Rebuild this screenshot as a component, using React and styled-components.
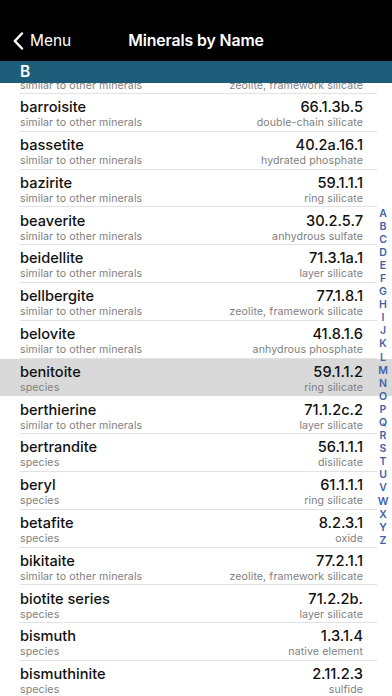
import React from "react";
import styled, { createGlobalStyle } from "styled-components";

const Global = createGlobalStyle`
  html, body { margin: 0; padding: 0; background: #fff; }
  body { width: 392px; height: 696px; overflow: hidden; font-family: Inter, "Noto Sans", sans-serif; -webkit-font-smoothing: antialiased; }
  * { box-sizing: border-box; }
`;

const Screen = styled.div`
  width: 392px;
  height: 696px;
  display: flex;
  flex-direction: column;
  background: #fff;
`;

const NavBar = styled.header`
  height: 61px;
  flex: none;
  background: #000;
  padding-top: 20px;
  display: grid;
  grid-template-columns: 1fr auto 1fr;
  align-items: center;
  color: #fff;
`;

const BackButton = styled.div`
  display: flex;
  align-items: center;
  gap: 6px;
  padding-left: 12px;
  font-size: 15.4px;
  font-weight: 400;
`;

const Title = styled.h1`
  margin: 0;
  font-size: 15.8px;
  font-weight: 600;
  letter-spacing: -0.1px;
`;

const Viewport = styled.div`
  position: relative;
  flex: 1;
  overflow: hidden;
`;

const SectionHeader = styled.div`
  position: absolute;
  top: 0;
  left: 0;
  right: 0;
  height: 21.5px;
  z-index: 2;
  background: #1d5d79;
  color: #fff;
  font-size: 15.5px;
  font-weight: 600;
  padding-left: 20px;
  display: flex;
  align-items: center;
`;

const List = styled.div`
  margin-top: -4.8px;
`;

const Row = styled.div`
  height: 37.8px;
  display: flex;
  padding-left: 20px;
  background: ${(p) => (p.$selected ? "#d9d9d9" : "#fff")};
`;

const RowInner = styled.div`
  flex: 1;
  display: flex;
  justify-content: space-between;
  padding-top: 4.3px;
  padding-right: 14px;
  margin-right: 15px;
  border-bottom: 1px solid ${(p) => (p.$selected ? "#d9d9d9" : "#e2e2e2")};
`;

const Col = styled.div`
  display: flex;
  flex-direction: column;
  align-items: ${(p) => (p.$right ? "flex-end" : "flex-start")};
`;

const Name = styled.div`
  font-size: 14.6px;
  line-height: 19px;
  font-weight: 500;
  color: #111;
`;

const Sub = styled.div`
  font-size: 10.6px;
  line-height: 12px;
  color: #808080;
  letter-spacing: 0.1px;
`;

const IndexBar = styled.div`
  position: absolute;
  right: 2px;
  top: 145.5px;
  width: 14px;
  display: flex;
  flex-direction: column;
  align-items: center;
  z-index: 3;
`;

const IndexLetter = styled.span`
  font-size: 10.5px;
  line-height: 13.1px;
  font-weight: 600;
  color: #4263a9;
`;

const rows = [
  ["", "similar to other minerals", "", "zeolite, framework silicate"],
  ["barroisite", "similar to other minerals", "66.1.3b.5", "double-chain silicate"],
  ["bassetite", "similar to other minerals", "40.2a.16.1", "hydrated phosphate"],
  ["bazirite", "similar to other minerals", "59.1.1.1", "ring silicate"],
  ["beaverite", "similar to other minerals", "30.2.5.7", "anhydrous sulfate"],
  ["beidellite", "similar to other minerals", "71.3.1a.1", "layer silicate"],
  ["bellbergite", "similar to other minerals", "77.1.8.1", "zeolite, framework silicate"],
  ["belovite", "similar to other minerals", "41.8.1.6", "anhydrous phosphate"],
  ["benitoite", "species", "59.1.1.2", "ring silicate", true],
  ["berthierine", "similar to other minerals", "71.1.2c.2", "layer silicate"],
  ["bertrandite", "species", "56.1.1.1", "disilicate"],
  ["beryl", "species", "61.1.1.1", "ring silicate"],
  ["betafite", "species", "8.2.3.1", "oxide"],
  ["bikitaite", "similar to other minerals", "77.2.1.1", "zeolite, framework silicate"],
  ["biotite series", "species", "71.2.2b.", "layer silicate"],
  ["bismuth", "species", "1.3.1.4", "native element"],
  ["bismuthinite", "species", "2.11.2.3", "sulfide"],
];

const Chevron = () => (
  <svg width="12" height="20" viewBox="0 0 12 20" fill="none">
    <path d="M10 2.5 L2.8 10 L10 17.5" stroke="#fff" strokeWidth="2.5" strokeLinecap="round" strokeLinejoin="round" />
  </svg>
);

export default function App() {
  const letters = "ABCDEFGHIJKLMNOPQRSTUVWXYZ".split("");
  return (
    <Screen>
      <Global />
      <NavBar>
        <BackButton>
          <Chevron />
          <span>Menu</span>
        </BackButton>
        <Title>Minerals by Name</Title>
        <div />
      </NavBar>
      <Viewport>
        <SectionHeader>B</SectionHeader>
        <List>
          {rows.map(([n, s, c, t, sel], i) => (
            <Row key={i} $selected={sel}>
              <RowInner $selected={sel}>
                <Col>
                  <Name>{n || "\u00a0"}</Name>
                  <Sub>{s}</Sub>
                </Col>
                <Col $right>
                  <Name>{c || "\u00a0"}</Name>
                  <Sub>{t}</Sub>
                </Col>
              </RowInner>
            </Row>
          ))}
        </List>
        <IndexBar>
          {letters.map((l) => (
            <IndexLetter key={l}>{l}</IndexLetter>
          ))}
        </IndexBar>
      </Viewport>
    </Screen>
  );
}
